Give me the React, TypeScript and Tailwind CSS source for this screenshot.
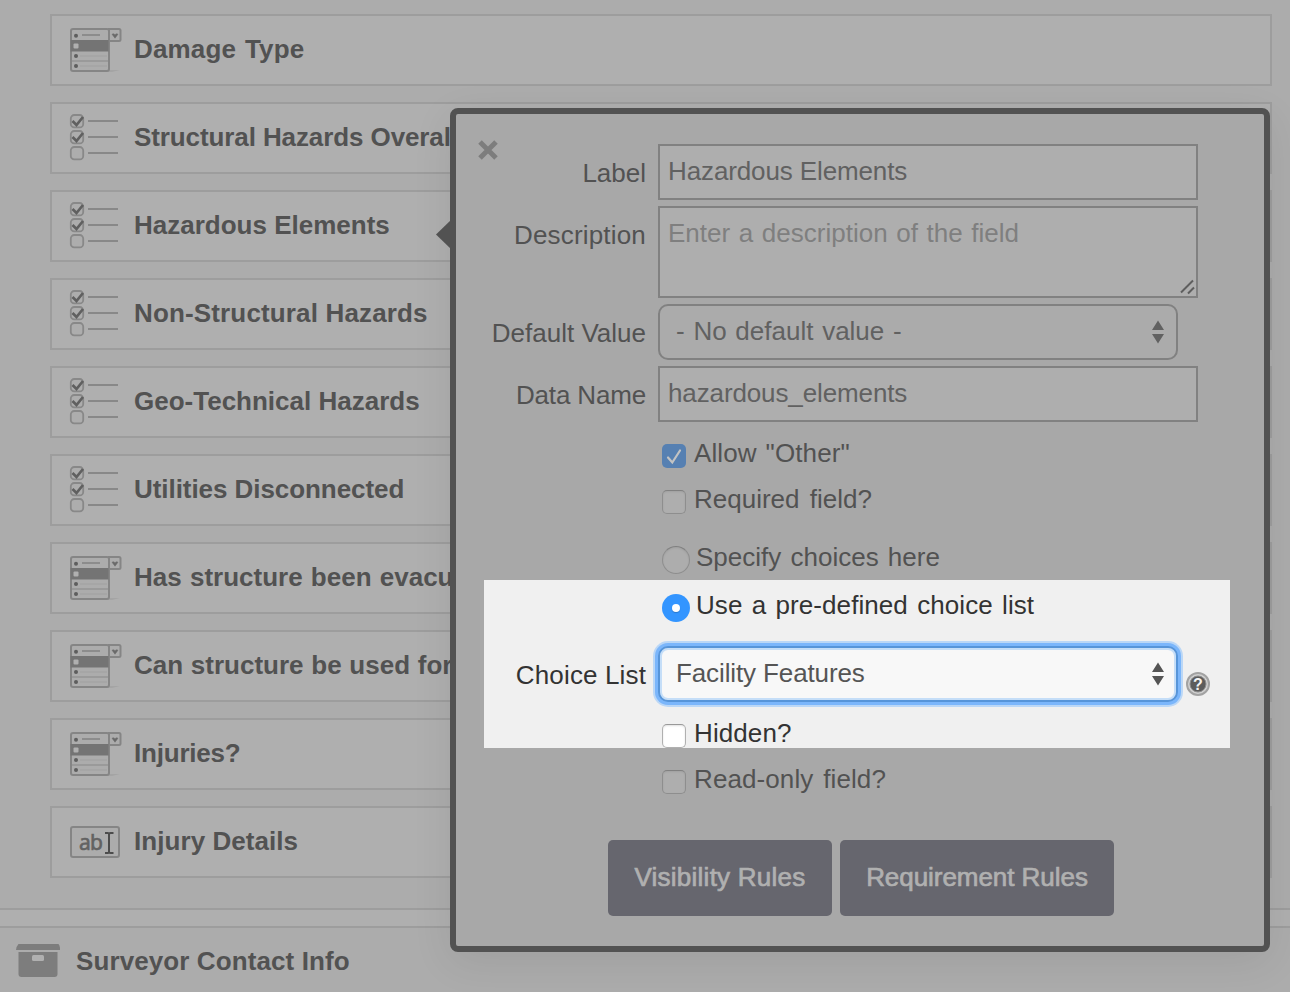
import React from 'react';

type IconKind = 'select' | 'checks' | 'text';

const fields: { label: string; icon: IconKind; spacing: string }[] = [
  { label: 'Damage Type', icon: 'select', spacing: 'tracking-[0.15px] [word-spacing:1.5px]' },
  { label: 'Structural Hazards Overal', icon: 'checks', spacing: 'tracking-[-0.1px]' },
  { label: 'Hazardous Elements', icon: 'checks', spacing: '' },
  { label: 'Non-Structural Hazards', icon: 'checks', spacing: 'tracking-[0.15px]' },
  { label: 'Geo-Technical Hazards', icon: 'checks', spacing: '' },
  { label: 'Utilities Disconnected', icon: 'checks', spacing: 'tracking-[-0.06px]' },
  { label: 'Has structure been evacu', icon: 'select', spacing: '[word-spacing:1px]' },
  { label: 'Can structure be used for', icon: 'select', spacing: '[word-spacing:0.5px]' },
  { label: 'Injuries?', icon: 'select', spacing: 'tracking-[-0.2px]' },
  { label: 'Injury Details', icon: 'text', spacing: 'tracking-[0.06px]' },
];

function SelectIcon() {
  return (
    <svg width="56" height="48" viewBox="0 0 56 48" fill="none">
      <path d="M6 46H44L52 44H42" fill="#a4a4a4" />
      <rect x="3" y="3" width="38" height="42" rx="2" fill="#acacac" stroke="#858585" strokeWidth="2" />
      <path d="M41 3h10a1.500 1.500 0 0 1 1.500 1.500v9a1.500 1.500 0 0 1-1.500 1.500h-10z" fill="#acacac" stroke="#858585" strokeWidth="2" />
      <rect x="2.500" y="14" width="38" height="11.500" fill="#747474" />
      <path d="M14 9h18" stroke="#8c8c8c" strokeWidth="2" />
      <path d="M4 35h36" stroke="#949494" strokeWidth="1.500" />
      <path d="M12 30h27M12 40h27" stroke="#a4a4a4" strokeWidth="1.500" />
      <circle cx="8" cy="9.800" r="2" fill="#5e5e5e" />
      <rect x="5.500" y="17.500" width="5" height="5" rx="1" fill="#b0b0b0" />
      <circle cx="8" cy="30" r="2" fill="#5e5e5e" />
      <circle cx="8" cy="40" r="2" fill="#5e5e5e" />
      <path d="M44 8.200l1.500-.5 1.500 1 1.500-1 1.500.5-3 4z" fill="#6a6a6a" stroke="#6a6a6a" strokeWidth=".5" />
    </svg>
  );
}

function ChecksIcon() {
  return (
    <svg width="56" height="50" viewBox="0 0 56 50" fill="none">
      {[8, 24, 40].map((y, i) => (
        <g key={y}>
          <rect x="2.800" y={y - 6} width="12.400" height="12.400" rx="3.500" fill="#adadad" stroke="#888888" strokeWidth="1.800" />
          {i < 2 && <path d={`M4.500 ${y}l4 4 6.500-8`} stroke="#606060" strokeWidth="2.700" />}
          <path d={`M20 ${y}h30`} stroke="#888888" strokeWidth="2" />
        </g>
      ))}
    </svg>
  );
}

function TextIcon() {
  return (
    <svg width="56" height="36" viewBox="0 0 56 36" fill="none">
      <rect x="3" y="3" width="48" height="30" rx="2" fill="#acacac" stroke="#858585" strokeWidth="2" />
      <text x="11" y="25.500" fontSize="21" fontWeight="400" fontFamily="Noto Sans, sans-serif" fill="#626262" stroke="#626262" strokeWidth=".6" textLength="24">ab</text>
      <path d="M37 9h3q1 0 1 1.500v17q0 1.500-1 1.500h-3M45.500 9h-3q-1.500 0-1.500 1.500v17q0 1.500 1.500 1.500h3" stroke="#4c4c4c" strokeWidth="2" />
    </svg>
  );
}

function FieldRow({ label, icon, spacing }: { label: string; icon: IconKind; spacing: string }) {
  return (
    <div className="flex h-[72px] items-center border-2 border-[#9d9d9d] bg-[#afafaf] pl-4 font-bold">
      <div className="w-[66px] shrink-0">
        {icon === 'select' && <SelectIcon />}
        {icon === 'checks' && <div className="-mt-px"><ChecksIcon /></div>}
        {icon === 'text' && <TextIcon />}
      </div>
      <span className={`-mt-[3px] whitespace-nowrap ${spacing}`}>{label}</span>
    </div>
  );
}

function Row({ label, className, spacing = '', children }: { label: string; className: string; spacing?: string; children: React.ReactNode }) {
  return (
    <div className={`flex items-start ${className}`}>
      <div className={`mr-3 mt-px w-[190px] shrink-0 text-right leading-[56px] ${spacing}`}>{label}</div>
      {children}
    </div>
  );
}

function Arrows() {
  return (
    <svg width="12" height="24" viewBox="0 0 12 24" fill="currentColor">
      <path d="M6 .5L12 10H0zM6 23.500L12 14H0z" />
    </svg>
  );
}

function CheckRow({ label, checked, lit, spacing = '' }: { label: string; checked?: boolean; lit?: boolean; spacing?: string }) {
  return (
    <label className={`flex h-[46px] items-center pl-[206px] ${lit ? 'text-[#333333]' : ''}`}>
      <span
        className={`mr-2 mt-[5px] flex size-6 items-center justify-center rounded-[5px] ${
          checked
            ? 'bg-[#5680b2]'
            : lit
              ? 'border border-[#b0b0b0] border-t-[#999999] bg-white shadow-[inset_0_1px_2px_rgba(0,0,0,0.12)]'
              : 'border border-[#8e8e8e] border-t-[#808080] bg-[#aeaeae] shadow-[inset_0_1px_2px_rgba(0,0,0,0.08)]'
        }`}
      >
        {checked && (
          <svg width="24" height="24" viewBox="0 0 24 24" fill="none">
            <path d="M6 13.500l4.300 5L18 6.500" stroke="#c3c3c3" strokeWidth="2.200" strokeLinecap="round" />
          </svg>
        )}
      </span>
      <span className={spacing}>{label}</span>
    </label>
  );
}

export default function App() {
  return (
    <div className="relative h-[992px] w-[1290px] overflow-hidden bg-[#acacac] font-['Liberation_Sans',Arial,sans-serif] text-[26px] leading-[32px] text-[#525252]">
      <div className="flex h-[910px] flex-col gap-4 border-b-2 border-[#9d9d9d] pl-[50px] pr-[18px] pt-[14px]">
        {fields.map((f) => (
          <FieldRow key={f.label} label={f.label} icon={f.icon} spacing={f.spacing} />
        ))}
      </div>
      <div className="h-4 bg-[#afafaf]" />
      <div className="flex h-[66px] items-start border-t-2 border-[#9d9d9d] pl-4 pt-[15px] font-bold">
        <svg className="mr-4 shrink-0" width="44" height="36" viewBox="0 0 44 36">
          <path d="M2.500 1h40q1.500 2 1.800 6H0Q.5 3 2.500 1z" fill="#7d7d7d" />
          <path d="M2.500 9h39v22q0 3-3 3h-33q-3 0-3-3z" fill="#7d7d7d" />
          <rect x="16" y="12" width="12" height="6" rx="1.500" fill="#b0b0b0" />
        </svg>
        <span className="mt-0.5 tracking-[0.1px]">Surveyor Contact Info</span>
      </div>

      <div className="absolute left-[450px] top-[108px] h-[844px] w-[820px] rounded-lg border-[6px] border-[#525252] bg-[#a8a8a8] shadow-[0_10px_40px_rgba(0,0,0,0.08)]">
        <svg className="absolute -left-5 top-[105px]" width="16" height="32" viewBox="0 0 16 32">
          <path d="M16 0L0 15.500 16 31z" fill="#525252" />
        </svg>
        <svg className="absolute left-[22px] top-[26px]" width="20" height="20" viewBox="0 0 20 20">
          <path d="M2 2l16 16M18 2L2 18" stroke="#7d7d7d" strokeWidth="5" />
        </svg>
        <div className="absolute left-7 top-[466px] h-[168px] w-[746px] bg-[#f0f0f0]" />

        <div className="relative flex flex-col pt-[30px]">
          <Row label="Label" className="h-[62px]">
            <div className="h-14 w-[540px] border-2 border-[#818181] bg-[#aeaeae] pl-2 leading-[50px] tracking-[-0.12px] text-[#616161]">Hazardous Elements</div>
          </Row>
          <Row label="Description" className="h-[98px]" spacing="tracking-[0.18px]">
            <div className="flex h-[92px] w-[540px] items-start justify-between border-2 border-[#818181] bg-[#aeaeae] pl-2 leading-[50px] text-[#7f7f7f]">
              <span className="[word-spacing:1.4px]">Enter a description of the field</span>
              <svg className="mr-[1px] self-end" width="16" height="18" viewBox="0 0 16 18">
                <path d="M2 14.500L14 2.500M9 15.500l6-6" stroke="#5e5e5e" strokeWidth="2" />
              </svg>
            </div>
          </Row>
          <Row label="Default Value" className="h-[62px]">
            <div className="flex h-14 w-[520px] items-center justify-between rounded-[10px] border-2 border-[#818181] bg-[#ababab] pl-4 pr-3 text-[#616161]">
              <span className="-mt-[2px] [word-spacing:1.5px]">- No default value -</span>
              <Arrows />
            </div>
          </Row>
          <Row label="Data Name" className="h-14" spacing="tracking-[-0.16px]">
            <div className="h-14 w-[540px] border-2 border-[#818181] bg-[#aeaeae] pl-2 leading-[50px] tracking-[-0.12px] text-[#616161]">hazardous_elements</div>
          </Row>

          <div className="mt-2">
            <CheckRow label={'Allow "Other"'} checked spacing="tracking-[0.12px] [word-spacing:1.5px]" />
            <CheckRow label="Required field?" spacing="[word-spacing:3px]" />
          </div>

          <div className="mt-3">
            <label className="flex h-12 items-center pl-[206px]">
              <span className="mr-1.5 mt-1 size-7 rounded-full border border-[#8e8e8e] border-t-[#808080] bg-[#adadad] shadow-[inset_0_1px_2px_rgba(0,0,0,0.08)]" />
              <span className="-mt-0.5 [word-spacing:2px]">Specify choices here</span>
            </label>
            <label className="flex h-12 items-center pl-[206px] text-[#333333]">
              <span className="mr-1.5 mt-1 flex size-7 items-center justify-center rounded-full bg-[#3395ff]">
                <span className="size-2 rounded-full bg-white shadow-[0_1px_1px_rgba(0,0,0,0.2)]" />
              </span>
              <span className="-mt-0.5 tracking-[0.07px] [word-spacing:2px]">Use a pre-defined choice list</span>
            </label>
          </div>

          <Row label="Choice List" className="mt-4 h-14 text-[#333333]" spacing="tracking-[0.14px]">
            <div className="flex h-14 w-[520px] shrink-0 items-center justify-between rounded-[10px] border-2 border-[#5795d9] bg-[#f8f8f8] pl-4 pr-3 text-[#555555] shadow-[0_0_0_3px_#7bb6fb,0_0_0_5px_#bbd7f6,inset_0_0_0_2px_#c5def8]">
              <span className="-mt-[2px] tracking-[-0.12px]">Facility Features</span>
              <Arrows />
            </div>
            <svg className="ml-2 mt-[26px]" width="24" height="24" viewBox="0 0 24 24">
              <circle cx="12" cy="12" r="11" fill="#d0d0d0" stroke="#a2a2a2" strokeWidth="2" />
              <circle cx="12" cy="12" r="8" fill="#5c5c5c" stroke="#8c8c8c" />
              <text x="12" y="17.500" textAnchor="middle" fontSize="16" fontWeight="bold" fill="#f4f4f4">?</text>
            </svg>
          </Row>

          <div className="mt-2">
            <CheckRow label="Hidden?" lit spacing="tracking-[0.1px]" />
            <CheckRow label="Read-only field?" spacing="tracking-[0.1px] [word-spacing:2.5px]" />
          </div>

          <div className="mt-[38px] flex gap-2 pl-[152px] text-[#b0b0b0]">
            <button className="h-[76px] w-[224px] rounded-[5px] bg-[#66666e] pb-[3px] tracking-[0.25px] [-webkit-text-stroke:0.7px_#b0b0b0]">Visibility Rules</button>
            <button className="h-[76px] w-[274px] rounded-[5px] bg-[#66666e] pb-[3px] tracking-[-0.05px] [-webkit-text-stroke:0.7px_#b0b0b0]">Requirement Rules</button>
          </div>
        </div>
      </div>
    </div>
  );
}
